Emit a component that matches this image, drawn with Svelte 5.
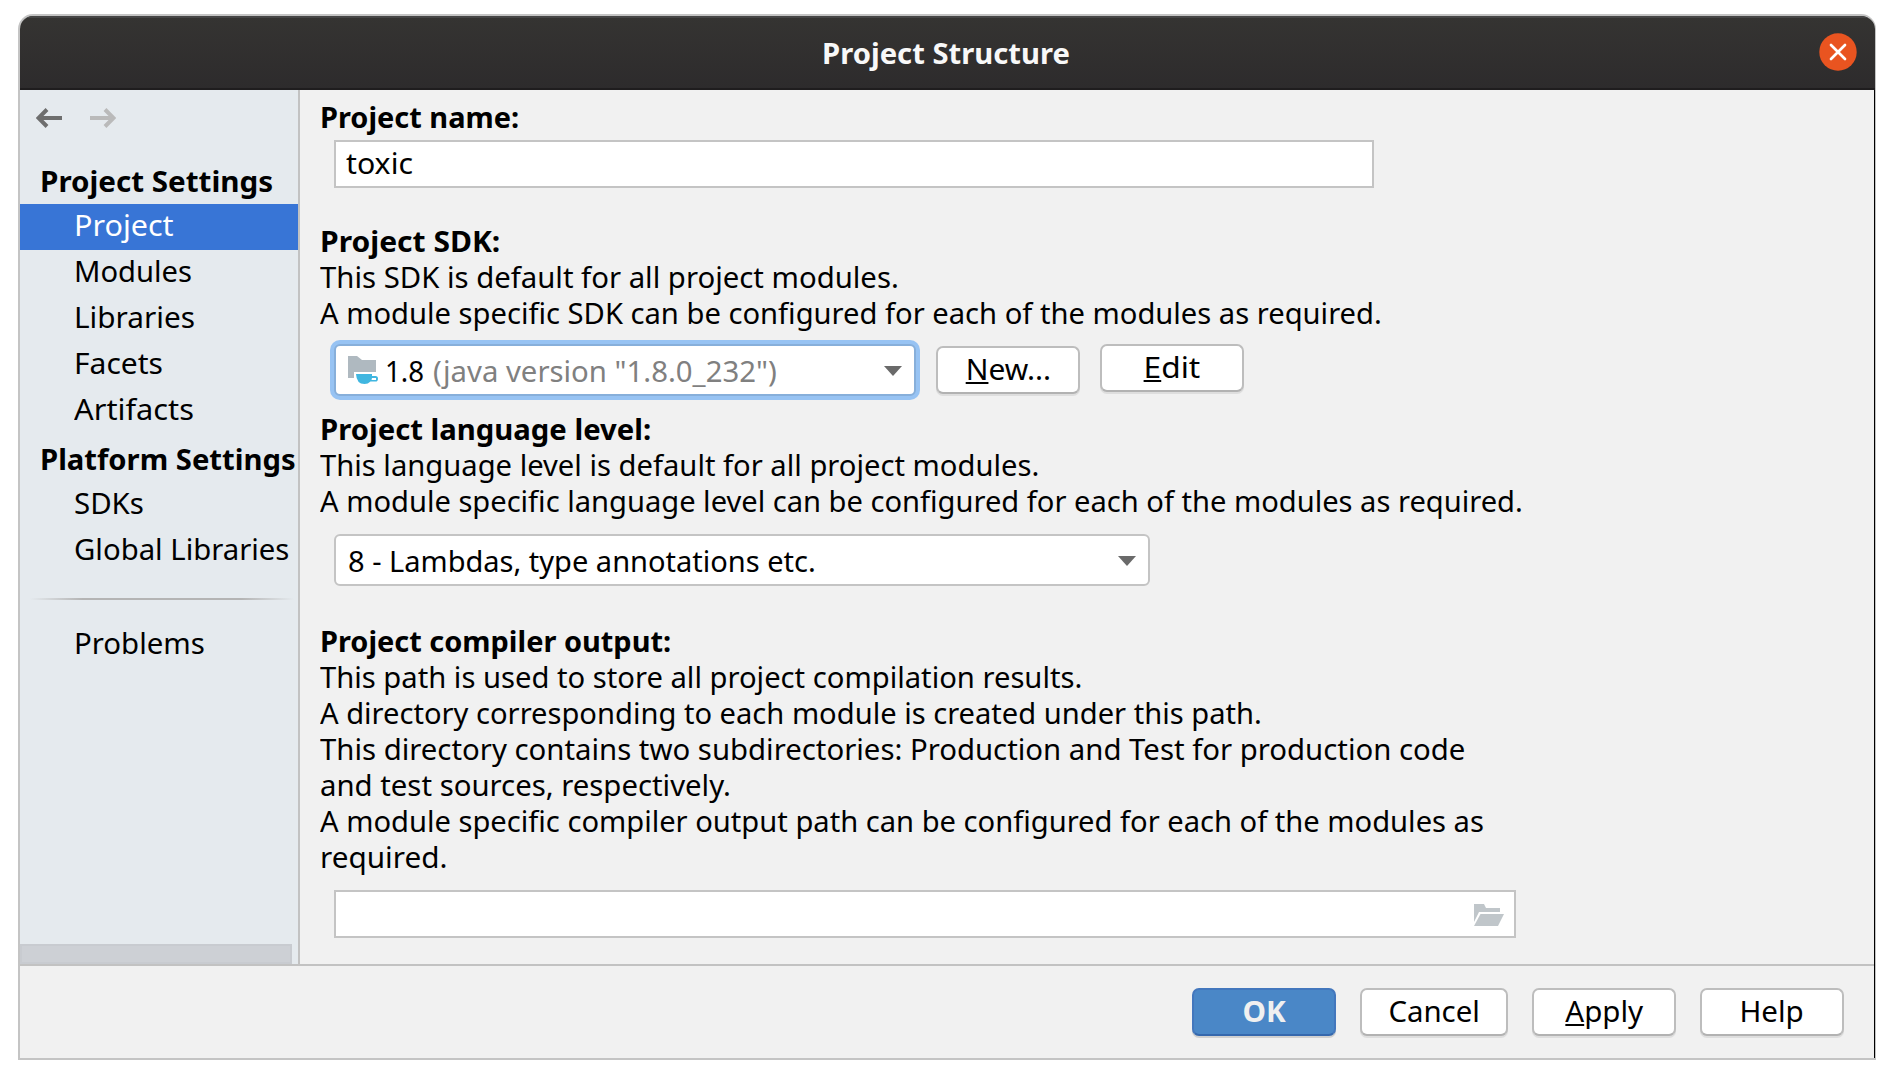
<script>
  const projectItems = [
    { text: 'Project', width: 97, selected: true },
    { text: 'Modules', width: 115 },
    { text: 'Libraries', width: 118 },
    { text: 'Facets', width: 86 },
    { text: 'Artifacts', width: 119 }
  ];
  const platformItems = [
    { text: 'SDKs', width: 68 },
    { text: 'Global Libraries', width: 213.5 }
  ];
  const sdkLines = [
    { text: 'This SDK is default for all project modules.', width: 577 },
    { text: 'A module specific SDK can be configured for each of the modules as required.', width: 1060 }
  ];
  const languageLines = [
    { text: 'This language level is default for all project modules.', width: 717.5 },
    { text: 'A module specific language level can be configured for each of the modules as required.', width: 1201 }
  ];
  const outputLines = [
    { text: 'This path is used to store all project compilation results.', width: 760.5 },
    { text: 'A directory corresponding to each module is created under this path.', width: 940 },
    { text: 'This directory contains two subdirectories: Production and Test for production code', width: 1144 },
    { text: 'and test sources, respectively.', width: 408 },
    { text: 'A module specific compiler output path can be configured for each of the modules as', width: 1163 },
    { text: 'required.', width: 123.5 }
  ];

  // Condenses or widens a label so that its drawn glyphs span the given width.
  function fit(node, width) {
    const ctx = document.createElement('canvas').getContext('2d');
    const style = getComputedStyle(node);
    ctx.font = `${style.fontWeight} ${style.fontSize} ${style.fontFamily}`;
    const m = ctx.measureText(node.textContent);
    const ink = m.actualBoundingBoxLeft + m.actualBoundingBoxRight;
    node.style.transform = `scaleX(${width / ink})`;
  }
</script>

{#snippet label(text, width)}
  <span class="fit" use:fit={width}>{text}</span>
{/snippet}

{#snippet accel(key, rest, width)}
  <span class="fit" use:fit={width}><u>{key}</u>{rest}</span>
{/snippet}

{#snippet chevron()}
  <svg class="chevron" width="18" height="10" viewBox="0 0 18 10"><path d="M0 0H18L9 10Z" fill="#6a6a6a" /></svg>
{/snippet}

{#snippet lines(list)}
  {#each list as line}
    <p>{@render label(line.text, line.width)}</p>
  {/each}
{/snippet}

<div class="window">
  <header class="titlebar">
    <h1>{@render label('Project Structure', 244.5)}</h1>
    <button class="close" aria-label="Close">
      <svg width="38" height="38" viewBox="0 0 38 38">
        <circle cx="19" cy="19" r="18.7" fill="#e95420" />
        <path d="M12 12L26 26M26 12L12 26" stroke="#fff" stroke-width="2.7" stroke-linecap="round" />
      </svg>
    </button>
  </header>

  <div class="body">
    <nav class="sidebar">
      <div class="history">
        <svg width="26" height="20" viewBox="0 0 26 20"><path d="M26 10H3M11 1.5L2.5 10L11 18.5" fill="none" stroke="#6e6e6e" stroke-width="4" /></svg>
        <svg width="26" height="20" viewBox="0 0 26 20"><path d="M0 10H23M15 1.5L23.5 10L15 18.5" fill="none" stroke="#bababa" stroke-width="4" /></svg>
      </div>
      <h2>{@render label('Project Settings', 230.5)}</h2>
      {#each projectItems as item}
        <div class="item" class:selected={item.selected}>{@render label(item.text, item.width)}</div>
      {/each}
      <h2>{@render label('Platform Settings', 253)}</h2>
      {#each platformItems as item}
        <div class="item">{@render label(item.text, item.width)}</div>
      {/each}
      <div class="separator"></div>
      <div class="item">{@render label('Problems', 128)}</div>
      <div class="scrollbar"></div>
    </nav>

    <main>
      <h3>{@render label('Project name:', 196)}</h3>
      <div class="field name">{@render label('toxic', 66)}</div>

      <section class="sdk">
        <h3>{@render label('Project SDK:', 177)}</h3>
        {@render lines(sdkLines)}
        <div class="sdk-row">
          <div class="combo focused">
            <svg class="folder" width="32" height="30" viewBox="0 0 32 30">
              <path d="M0 0H9L14 4H28V16H6V22H0Z" fill="#afb9c0" />
              <path d="M8 18H24V20H27.5Q30 20 30 22.7Q30 25.5 27.5 25.5H22.5Q20 28 16.5 28Q8.5 28 8 18Z" fill="#40b6e0" />
              <path d="M24 22H28V24H23.5Z" fill="#fff" />
            </svg>
            <span class="version">{@render label('1.8', 36.5)}</span>
            <span class="detail">{@render label('(java version "1.8.0_232")', 342)}</span>
            {@render chevron()}
          </div>
          <button class="btn new">{@render accel('N', 'ew...', 81.5)}</button>
          <button class="btn edit">{@render accel('E', 'dit', 54)}</button>
        </div>
      </section>

      <section class="language">
        <h3>{@render label('Project language level:', 328)}</h3>
        {@render lines(languageLines)}
        <div class="combo level">
          {@render label('8 - Lambdas, type annotations etc.', 465)}
          {@render chevron()}
        </div>
      </section>

      <section class="output">
        <h3>{@render label('Project compiler output:', 348)}</h3>
        {@render lines(outputLines)}
        <div class="field path">
          <svg width="30" height="22" viewBox="0 0 30 22">
            <path d="M0 0H10L12 4H26V8H5L0 18Z" fill="#c0c6ca" />
            <path d="M6.5 10H30L24 22H0Z" fill="#c0c6ca" />
          </svg>
        </div>
      </section>
    </main>
  </div>

  <footer>
    <button class="btn primary">{@render label('OK', 43)}</button>
    <button class="btn cancel">{@render label('Cancel', 89)}</button>
    <button class="btn">{@render accel('A', 'pply', 78)}</button>
    <button class="btn">{@render label('Help', 61.5)}</button>
  </footer>
</div>

<style>
  :global(body) {
    background: #fff;
  }
  .window,
  .window * {
    box-sizing: border-box;
  }
  .window {
    display: flex;
    flex-direction: column;
    width: 1858px;
    height: 1046px;
    margin: 14px 0 0 18px;
    border: 2px solid #c4c4c4;
    border-right-width: 1px;
    border-radius: 15px 15px 0 0;
    overflow: hidden;
    background: #f1f1f1;
    color: #000;
    font: 29px/36px 'Noto Sans', 'Open Sans', sans-serif;
    white-space: nowrap;
  }
  h1, h2, h3, p {
    margin: 0;
    font-size: inherit;
  }
  h3, p {
    height: 36px;
  }
  .fit {
    display: inline-block;
    transform-origin: left;
    white-space: pre;
  }
  u {
    text-decoration-thickness: 2px;
    text-underline-offset: 2px;
    text-decoration-skip-ink: none;
  }
  button {
    padding: 0;
    border: 0;
    background: none;
    color: inherit;
    font: inherit;
  }
  .titlebar {
    display: grid;
    grid-template-columns: 54px 1fr 56px;
    align-items: start;
    flex: none;
    height: 74px;
    padding-top: 17px;
    background: linear-gradient(#353432, #2d2b2c);
    box-shadow: inset 0 2px #454545, inset 0 -2px #1f1d1e;
  }
  h1 {
    grid-column: 2;
    height: 36px;
    line-height: 40px;
    text-align: center;
    color: #f8f8f8;
  }
  h1 .fit,
  .btn .fit {
    transform-origin: center;
  }
  .close {
    height: 38px;
    width: 38px;
  }
  .close svg {
    display: block;
  }
  .body {
    display: flex;
    flex: none;
    height: 874px;
    border-right: 1px solid #000;
  }
  .sidebar {
    display: flex;
    flex-direction: column;
    width: 280px;
    background: #e5eaee;
    border-right: 2px solid #c2c2c2;
    overflow: hidden;
  }
  .history {
    display: flex;
    gap: 28px;
    height: 66px;
    padding: 18px 16px;
  }
  h2 {
    height: 48px;
    padding-left: 20px;
    line-height: 50px;
  }
  .item {
    height: 46px;
    padding-left: 54px;
    line-height: 42px;
  }
  .selected {
    background: #3875d6;
    color: #fff;
  }
  .separator {
    height: 2px;
    margin: 24px 4px 22px 10px;
    background: linear-gradient(90deg, transparent, #b4b4b4 20%, #b4b4b4 80%, transparent);
  }
  .scrollbar {
    width: 272px;
    height: 20px;
    margin-top: auto;
    background: #cdd0d5;
    border: 2px solid #c8cbd0;
  }
  main {
    flex: 1;
    padding: 9px 0 0 20px;
  }
  h3 {
    margin-left: -0.5px;
  }
  .field {
    height: 48px;
    margin-left: 14px;
    background: #fff;
    border: 2px solid #c4c4c4;
  }
  .name {
    width: 1040px;
    margin-top: 5px;
    padding-left: 10px;
    line-height: 42px;
  }
  .sdk {
    margin-top: 35px;
  }
  .sdk-row {
    display: flex;
    align-items: flex-start;
    margin: 9px 0 0 14px;
  }
  .combo {
    display: flex;
    align-items: center;
    height: 52px;
    background: #fff;
    border: 2px solid #c4c4c4;
    border-radius: 6px;
  }
  .focused {
    width: 582px;
    margin-top: 4px;
    padding-left: 12px;
    border-color: #87afda;
    box-shadow: 0 0 0 4px #97c3f3;
  }
  .folder {
    margin-top: 2px;
  }
  .version {
    width: 48px;
    margin-left: 5px;
    padding-top: 1px;
  }
  .detail {
    color: #808080;
    padding-top: 1px;
  }
  .chevron {
    margin: 2px 12px 0 auto;
  }
  .btn {
    width: 144px;
    height: 48px;
    background: #fff;
    border: 2px solid #bdbdbd;
    border-bottom-color: #b2b2b2;
    border-radius: 7px;
    box-shadow: 0 2px #dedede;
    line-height: 40px;
    padding-bottom: 2px;
    text-align: center;
  }
  .new {
    margin: 6px 0 0 20px;
  }
  .edit {
    margin: 4px 0 0 20px;
  }
  .language {
    margin-top: 15px;
  }
  .level {
    width: 816px;
    margin: 15px 0 0 14px;
    padding-left: 12px;
  }
  .level .fit {
    padding-top: 2px;
  }
  .output {
    margin-top: 37px;
  }
  .path {
    display: flex;
    align-items: center;
    justify-content: flex-end;
    width: 1182px;
    margin-top: 15px;
    padding: 2px 10px 0 0;
  }
  footer {
    display: flex;
    justify-content: flex-end;
    gap: 24px;
    flex: 1;
    padding: 24px 30px 0 0;
    box-shadow: inset 0 2px #c2c2c2;
    border-right: 1px solid #000;
  }
  .cancel {
    width: 148px;
  }
  .primary {
    background: #4a87c7;
    border-color: #4377bd;
    border-bottom-color: #3568ad;
    box-shadow: 0 2px #d0d0d0;
    color: #f0f0f0;
    font-weight: 700;
  }
</style>
